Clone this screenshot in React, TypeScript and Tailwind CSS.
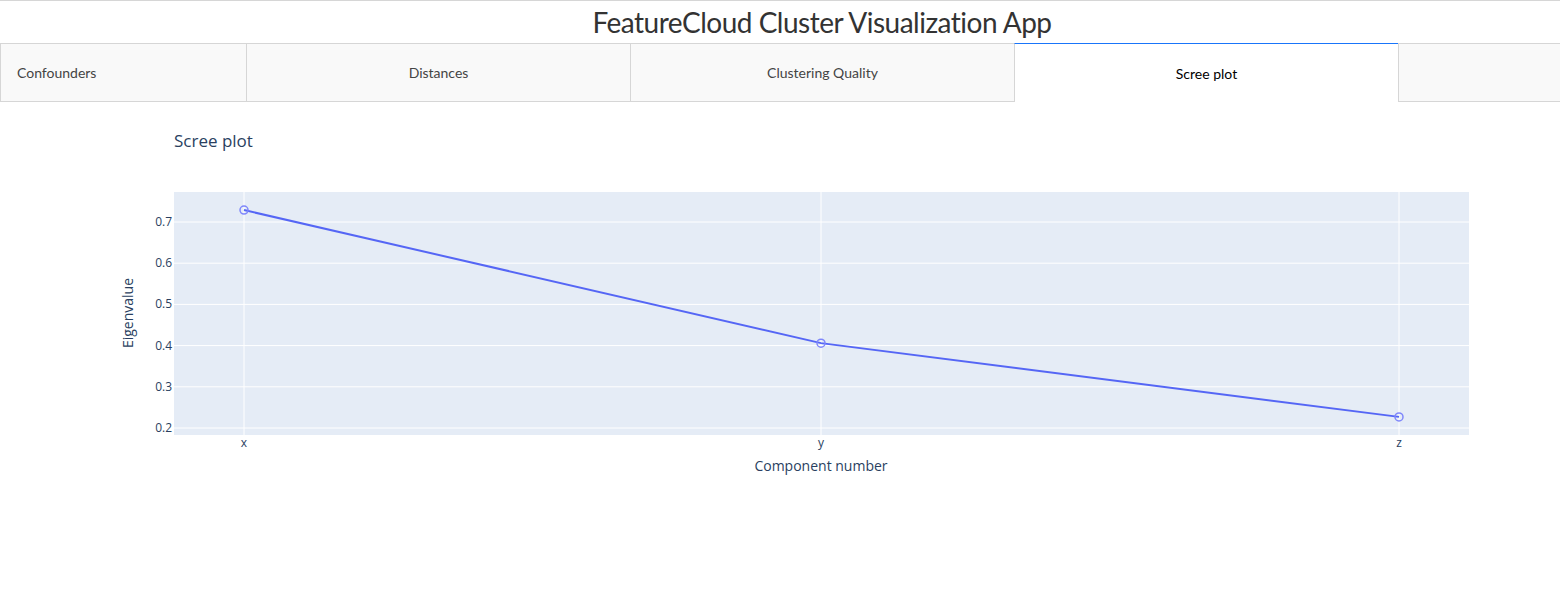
import React from "react";

const TABS = [
  { label: "Confounders", w: "w-[246px]", align: "justify-start pl-4" },
  { label: "Distances", w: "w-[384px]", align: "justify-center" },
  { label: "Clustering Quality", w: "w-[384px]", align: "justify-center" },
  { label: "Scree plot", w: "w-[384px]", align: "justify-center", active: true },
];

// plot geometry (page coords shifted by the 102px header)
const TOP = 102;
const X0 = 174;
const X1 = 1469;
const Y0 = 192 - TOP;
const Y1 = 435 - TOP;
const yOf = (v: number) => 428 - TOP - (v - 0.2) * 412;
const POINTS = [
  { label: "x", x: 244, v: 0.729 },
  { label: "y", x: 821, v: 0.406 },
  { label: "z", x: 1399, v: 0.227 },
];
const TICKS = [0.2, 0.3, 0.4, 0.5, 0.6, 0.7];

function ScreePlot() {
  const font = "'Open Sans', verdana, arial, sans-serif";
  return (
    <svg width={1560} height={400} className="block" style={{ fontFamily: font }}>
      <text x={174} y={147 - TOP} fontSize={17} fill="#2a3f5f">
        Scree plot
      </text>
      <rect x={X0} y={Y0} width={X1 - X0} height={Y1 - Y0} fill="#E5ECF6" />
      {TICKS.map((t) => (
        <g key={t}>
          <line x1={X0} x2={X1} y1={yOf(t)} y2={yOf(t)} stroke="#fff" strokeWidth={1} />
          <text x={172} y={yOf(t) + 4} fontSize={12} fill="#2a3f5f" textAnchor="end">
            {t.toFixed(1)}
          </text>
        </g>
      ))}
      {POINTS.map((p) => (
        <g key={p.label}>
          <line x1={p.x} x2={p.x} y1={Y0} y2={Y1} stroke="#fff" strokeWidth={1} />
          <text x={p.x} y={447 - TOP} fontSize={12} fill="#2a3f5f" textAnchor="middle">
            {p.label}
          </text>
        </g>
      ))}
      <polyline
        points={POINTS.map((p) => `${p.x},${yOf(p.v)}`).join(" ")}
        fill="none"
        stroke="#5566f5"
        strokeWidth={2}
      />
      {POINTS.map((p) => (
        <circle key={p.label} cx={p.x} cy={yOf(p.v)} r={4} fill="none" stroke="#7f87fb" strokeWidth={1.5} />
      ))}
      <text
        x={0}
        y={0}
        fontSize={14}
        fill="#2a3f5f"
        textAnchor="middle"
        transform={`translate(133 ${313 - TOP}) rotate(-90)`}
      >
        Eigenvalue
      </text>
      <text x={821} y={471 - TOP} fontSize={14} fill="#2a3f5f" textAnchor="middle">
        Component number
      </text>
    </svg>
  );
}

export default function App() {
  return (
    <div className="w-[1560px] bg-white font-['Lato',sans-serif]">
      <div className="border-t border-[#d6d6d6] h-[43px] flex items-center justify-center pl-[84px]">
        <h1 className="text-[28px] font-normal text-[#333] leading-none tracking-[-0.5px]">
          FeatureCloud Cluster Visualization App
        </h1>
      </div>
      <div className="flex h-[59px] border-t border-[#d6d6d6]">
        {TABS.map((t) =>
          t.active ? (
            <div
              key={t.label}
              className={`${t.w} -mt-px flex items-center ${t.align} bg-white border-t border-t-[#1975fa] border-l border-l-[#d6d6d6] text-[14px] text-black`}
            >
              {t.label}
            </div>
          ) : (
            <div
              key={t.label}
              className={`${t.w} flex items-center ${t.align} bg-[#f9f9f9] border-l border-b border-[#d6d6d6] text-[14px] text-[#444]`}
            >
              {t.label}
            </div>
          )
        )}
        <div className="flex-1 bg-[#f9f9f9] border-l border-b border-[#d6d6d6]" />
      </div>
      <ScreePlot />
    </div>
  );
}
